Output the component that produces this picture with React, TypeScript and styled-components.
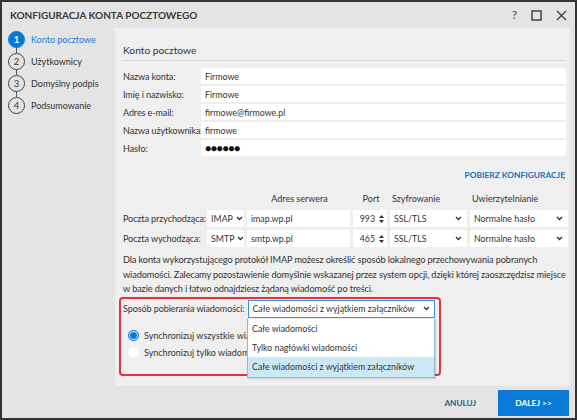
import styled, { createGlobalStyle } from 'styled-components';

const GlobalStyle = createGlobalStyle`
  body {
    margin: 0;
    font-family: Lato, 'Noto Sans', sans-serif;
    color: #333;
  }
  * { box-sizing: border-box; }
`;

const Window = styled.div`
  width: 577px;
  height: 420px;
  border: 2px solid #333;
  background: #e4e4e4;
  display: flex;
  flex-direction: column;
  font-size: 9px;
  overflow: hidden;
`;

const TitleBar = styled.div`
  height: 26px;
  display: flex;
  align-items: center;
  padding: 0 8px 0 8px;
  h1 {
    flex: 1;
    margin: 0;
    font-size: 10px;
    font-weight: 700;
    color: #3a3a3a;
  }
`;

const TitleButtons = styled.div`
  display: flex;
  gap: 14px;
  align-items: center;
  color: #444;
  svg { display: block; }
`;

const HelpMark = styled.span`
  font-size: 12px;
  line-height: 14px;
`;

const Body = styled.div`
  flex: 1;
  display: flex;
  min-height: 0;
`;

const Sidebar = styled.nav`
  flex: none;
  width: 113px;
  padding: 0 0 0 6px;
  display: flex;
  flex-direction: column;
`;

const Step = styled.div<{ $active?: boolean; $last?: boolean }>`
  display: flex;
  align-items: center;
  gap: 6px;
  height: 22px;
  position: relative;
  white-space: nowrap;
  color: ${(p) => (p.$active ? '#1a7ad4' : '#333')};
  font-size: 9px;
  &::after {
    content: '';
    display: ${(p) => (p.$last ? 'none' : 'block')};
    position: absolute;
    left: 8px;
    top: 19px;
    width: 1px;
    height: 6px;
    background: #555;
  }
`;

const StepNum = styled.span<{ $active?: boolean }>`
  width: 17px;
  height: 17px;
  flex: none;
  border-radius: 50%;
  display: flex;
  align-items: center;
  justify-content: center;
  font-size: 9.5px;
  font-weight: ${(p) => (p.$active ? 700 : 400)};
  background: ${(p) => (p.$active ? '#0a78d6' : 'transparent')};
  color: ${(p) => (p.$active ? '#fff' : '#333')};
  border: 1.3px solid ${(p) => (p.$active ? '#0a78d6' : '#444')};
`;

const Panel = styled.main`
  flex: 1;
  min-width: 0;
  margin-right: 5px;
  background: #efefef;
  padding: 16px 2px 0 8px;
  position: relative;
`;

const Heading = styled.h2`
  margin: 0 2px 0 0;
  font-size: 10.2px;
  font-weight: 400;
  color: #333;
  padding-bottom: 4px;
  border-bottom: 1px solid #d9d9d9;
`;

const FormGrid = styled.div`
  display: grid;
  grid-template-columns: 78px 1fr;
  row-gap: 2px;
  margin: 7px 2px 0 0;
  align-items: center;
`;

const Label = styled.span`
  color: #333;
  white-space: nowrap;
  letter-spacing: -0.08px;
`;

const Field = styled.div<{ $tall?: boolean }>`
  height: ${(p) => (p.$tall ? '17px' : '16px')};
  background: #fff;
  display: flex;
  align-items: center;
  padding: 0 4px;
  font-size: 8.8px;
  color: #333;
  white-space: nowrap;
  overflow: hidden;
  svg { flex: none; }
`;

const Password = styled(Field)`
  font-size: 10.5px;
  letter-spacing: -0.5px;
  color: #111;
`;

const FetchRow = styled.div`
  display: flex;
  justify-content: flex-end;
  margin-top: 14px;
  padding-right: 3px;
`;

const LinkButton = styled.span`
  font-weight: 700;
  font-size: 8.4px;
  color: #1a6fb8;
`;

const ServerGrid = styled.div`
  display: grid;
  grid-template-columns: 81px 37px 103px 34px 77px 98px;
  column-gap: 3px;
  row-gap: 3px;
  margin-top: 13px;
  align-items: center;
`;

const ColHead = styled.span<{ $align?: string }>`
  color: #333;
  text-align: ${(p) => p.$align || 'left'};
  padding-left: 2px;
  height: 14px;
`;

const Select = styled(Field)<{ $focus?: boolean }>`
  justify-content: space-between;
  gap: 3px;
  height: ${(p) => (p.$focus ? '18px' : '17px')};
  border: 1px solid ${(p) => (p.$focus ? '#3b93d6' : 'transparent')};
  padding: 0 4px 0 3px;
`;

const PortField = styled(Field)`
  height: 17px;
  justify-content: flex-end;
  gap: 4px;
  padding-right: 3px;
`;

const Note = styled.p`
  margin: 6px 0 0 0;
  font-size: 9.2px;
  letter-spacing: -0.12px;
  line-height: 14.5px;
  color: #333;
  white-space: nowrap;
`;

const Highlight = styled.div`
  margin: 0 0 0 -4px;
  width: 322px;
  height: 79px;
  border: 2px solid #e8313d;
  border-radius: 4px;
  padding: 1px 4px 0 2px;
  position: relative;
`;

const MethodRow = styled.div`
  display: flex;
  align-items: center;
  gap: 4px;
  ${Select} { width: 189px; }
`;

const Radios = styled.div`
  display: flex;
  flex-direction: column;
  gap: 6px;
  margin: 12px 0 0 5px;
  width: 121px;
  overflow: hidden;
`;

const Radio = styled.label<{ $checked?: boolean }>`
  display: flex;
  align-items: center;
  gap: 5px;
  white-space: nowrap;
  &::before {
    content: '';
    flex: none;
    width: 9px;
    height: 9px;
    border-radius: 50%;
    background: ${(p) => (p.$checked ? '#0a7ad6' : '#fff')};
    box-shadow: ${(p) => (p.$checked ? 'inset 0 0 0 1px #fff' : 'none')};
    border: 1px solid ${(p) => (p.$checked ? '#0a7ad6' : '#fff')};
  }
`;

const Dropdown = styled.ul`
  position: absolute;
  left: 126px;
  top: 20px;
  width: 188px;
  margin: 0;
  padding: 0;
  list-style: none;
  background: #fff;
  border: 1px solid #8db8db;
  border-top: none;
  box-shadow: 1px 1px 2px rgba(0, 0, 0, 0.15);
`;

const Option = styled.li<{ $selected?: boolean }>`
  height: 18px;
  display: flex;
  align-items: center;
  padding-left: 4px;
  font-size: 8.8px;
  color: #333;
  white-space: nowrap;
  background: ${(p) => (p.$selected ? '#cce8f5' : '#fff')};
  &:first-child { height: 20px; }
  &:last-child { height: 20px; }
`;

const Footer = styled.footer`
  height: 32px;
  display: flex;
  align-items: center;
  justify-content: flex-end;
  padding: 2px 6px 0 0;
  gap: 22px;
`;

const Cancel = styled.span`
  font-weight: 700;
  font-size: 8.2px;
  color: #24609a;
`;

const Next = styled.button`
  width: 71px;
  height: 26px;
  border: none;
  background: #0a7ad6;
  color: #fff;
  font-family: inherit;
  font-weight: 700;
  font-size: 8.4px;
  padding: 0;
`;

const Chevron = () => (
  <svg width="7" height="5" viewBox="0 0 7 5">
    <path d="M1 1l2.5 2.5L6 1" fill="none" stroke="#333" strokeWidth="1.4" />
  </svg>
);

const Spinner = () => (
  <svg width="5" height="10" viewBox="0 0 5 10">
    <path d="M0 4L2.5 1L5 4z M0 6L2.5 9L5 6z" fill="#333" />
  </svg>
);

const steps = ['Konto pocztowe', 'Użytkownicy', 'Domyślny podpis', 'Podsumowanie'];

export default function App() {
  return (
    <>
      <GlobalStyle />
      <Window>
        <TitleBar>
          <h1>KONFIGURACJA KONTA POCZTOWEGO</h1>
          <TitleButtons>
            <HelpMark>?</HelpMark>
            <svg width="11" height="11" viewBox="0 0 11 11">
              <rect x="1" y="1" width="9" height="9" fill="none" stroke="#444" strokeWidth="1.5" />
            </svg>
            <svg width="11" height="11" viewBox="0 0 11 11">
              <path d="M1 1l9 9M10 1l-9 9" stroke="#444" strokeWidth="1.4" />
            </svg>
          </TitleButtons>
        </TitleBar>
        <Body>
          <Sidebar>
            {steps.map((s, i) => (
              <Step key={s} $active={i === 0} $last={i === steps.length - 1}>
                <StepNum $active={i === 0}>{i + 1}</StepNum>
                {s}
              </Step>
            ))}
          </Sidebar>
          <Panel>
            <Heading>Konto pocztowe</Heading>
            <FormGrid>
              <Label>Nazwa konta:</Label>
              <Field>Firmowe</Field>
              <Label>Imię i nazwisko:</Label>
              <Field>Firmowe</Field>
              <Label>Adres e-mail:</Label>
              <Field>firmowe@firmowe.pl</Field>
              <Label>Nazwa użytkownika:</Label>
              <Field>firmowe</Field>
              <Label>Hasło:</Label>
              <Password>●●●●●●</Password>
            </FormGrid>
            <FetchRow>
              <LinkButton>POBIERZ KONFIGURACJĘ</LinkButton>
            </FetchRow>
            <ServerGrid>
              <span />
              <span />
              <ColHead $align="center">Adres serwera</ColHead>
              <ColHead $align="center">Port</ColHead>
              <ColHead>Szyfrowanie</ColHead>
              <ColHead>Uwierzytelnianie</ColHead>

              <Label>Poczta przychodząca:</Label>
              <Select>IMAP <Chevron /></Select>
              <Field $tall>imap.wp.pl</Field>
              <PortField>993 <Spinner /></PortField>
              <Select>SSL/TLS <Chevron /></Select>
              <Select>Normalne hasło <Chevron /></Select>

              <Label>Poczta wychodząca:</Label>
              <Select>SMTP <Chevron /></Select>
              <Field $tall>smtp.wp.pl</Field>
              <PortField>465 <Spinner /></PortField>
              <Select>SSL/TLS <Chevron /></Select>
              <Select>Normalne hasło <Chevron /></Select>
            </ServerGrid>
            <Note>
              Dla konta wykorzystującego protokół IMAP możesz określić sposób lokalnego przechowywania pobranych
              <br />
              wiadomości. Zalecamy pozostawienie domyślnie wskazanej przez system opcji, dzięki której zaoszczędzisz miejsce
              <br />
              w bazie danych i łatwo odnajdziesz żądaną wiadomość po treści.
            </Note>
            <Highlight>
              <MethodRow>
                <Label>Sposób pobierania wiadomości:</Label>
                <Select $focus>
                  Całe wiadomości z wyjątkiem załączników <Chevron />
                </Select>
              </MethodRow>
              <Radios>
                <Radio $checked>Synchronizuj wszystkie wiadomości</Radio>
                <Radio>Synchronizuj tylko wiadomości z ostatnich</Radio>
              </Radios>
              <Dropdown>
                <Option>Całe wiadomości</Option>
                <Option>Tylko nagłówki wiadomości</Option>
                <Option $selected>Całe wiadomości z wyjątkiem załączników</Option>
              </Dropdown>
            </Highlight>
          </Panel>
        </Body>
        <Footer>
          <Cancel>ANULUJ</Cancel>
          <Next>DALEJ &gt;&gt;</Next>
        </Footer>
      </Window>
    </>
  );
}
